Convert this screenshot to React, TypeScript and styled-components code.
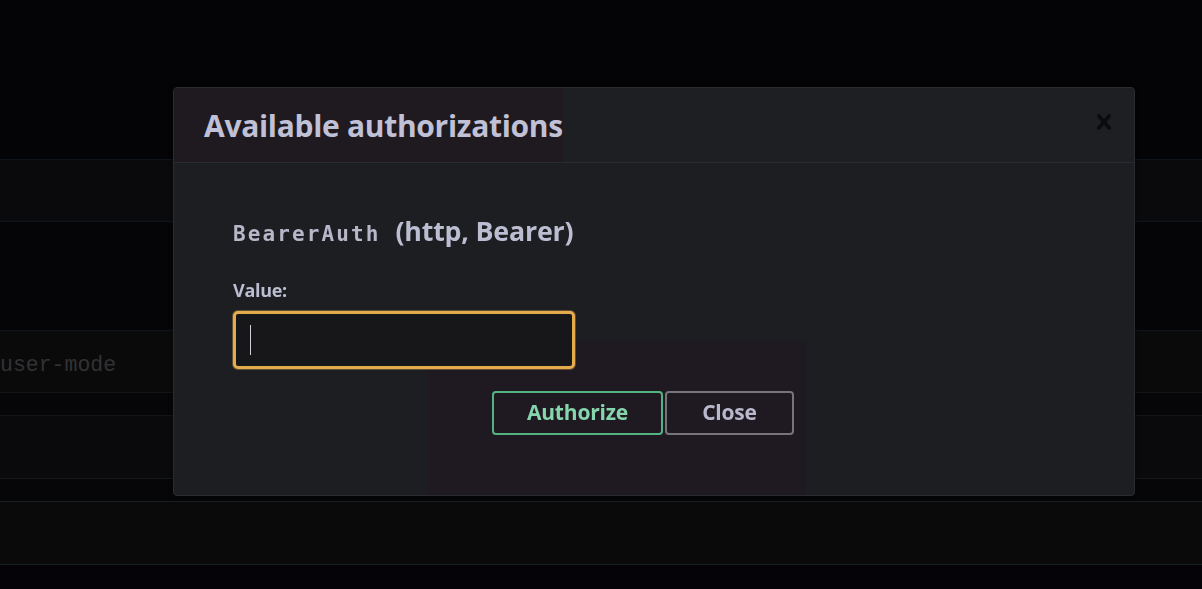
import React from 'react';
import styled, { createGlobalStyle } from 'styled-components';

const GlobalStyle = createGlobalStyle`
  html, body {
    margin: 0;
    padding: 0;
    background: #040305;
    overflow: hidden;
  }
`;

const rows = [
  { height: 159, bg: '#040305', line: '#0f151d' },
  { height: 61, bg: '#0a090b', line: '#10161e' },
  { height: 108, bg: '#050407', line: '#10161e' },
  { height: 61, bg: '#0a0a0a', line: '#141518', text: 'user-mode' },
  { height: 22, bg: '#060508', line: '#141518' },
  { height: 62, bg: '#0a090b', line: '#141a1a' },
  { height: 22, bg: '#060508', line: '#17211e' },
  { height: 62, bg: '#0a0a0a', line: '#17211e' },
  { height: 30, bg: '#050307', line: 'transparent' },
];

const Page = styled.div`
  width: 1202px;
  height: 589px;
  display: flex;
  flex-direction: column;
  overflow: hidden;
`;

const Row = styled.div<{ $h: number; $bg: string; $line: string }>`
  flex: none;
  height: ${(p) => p.$h}px;
  background: ${(p) => p.$bg};
  border-bottom: 1px solid ${(p) => p.$line};
  display: flex;
  align-items: center;
`;

const RowText = styled.span`
  font-family: 'Liberation Mono', monospace;
  font-size: 21.5px;
  color: #323235;
  margin-top: 6px;
`;

const Backdrop = styled.div`
  position: fixed;
  inset: 0;
`;

const Modal = styled.div`
  position: absolute;
  left: 173px;
  top: 87px;
  width: 960px;
  height: 407px;
  background: #1d1e22;
  border: 1px solid #2b2c31;
  border-radius: 4px;
  box-shadow: 0 1px 4px rgba(0, 0, 0, 0.5);
  display: flex;
  flex-direction: column;
  overflow: hidden;
`;

const Header = styled.div`
  height: 74px;
  flex: none;
  display: flex;
  align-items: center;
  justify-content: space-between;
  border-bottom: 1px solid #2a2b30;
  background: #1e1f23;
`;

const Title = styled.h3`
  margin: 0;
  height: 100%;
  display: flex;
  align-items: center;
  padding: 0 0 0 30px;
  background: #1e1a20;
  font-family: 'Open Sans', 'Noto Sans', sans-serif;
  font-weight: 700;
  font-size: 30px;
  color: #c0c0d6;
  letter-spacing: -0.3px;
`;

const CloseX = styled.button`
  border: none;
  background: transparent;
  padding: 0;
  margin: 0 15px 6px 0;
  width: 30px;
  height: 30px;
  display: flex;
  align-items: center;
  justify-content: center;
  cursor: pointer;
`;

const Body = styled.div`
  position: relative;
  flex: 1;
  padding: 53px 60px 0 59px;
`;

const Tint = styled.div`
  position: absolute;
  left: 254px;
  top: 178px;
  width: 378px;
  bottom: 0;
  background: #1f1a21;
  pointer-events: none;
`;

const SchemeTitle = styled.h4`
  position: relative;
  margin: 0;
  display: flex;
  align-items: baseline;
  gap: 15px;
  line-height: 30px;
  color: #bdbdd1;
`;

const SchemeName = styled.code`
  font-family: 'DejaVu Sans Mono', monospace;
  font-weight: 700;
  font-size: 21px;
  letter-spacing: 2.1px;
  color: #b7b7c9;
`;

const SchemeType = styled.span`
  font-family: 'Open Sans', 'Noto Sans', sans-serif;
  font-weight: 700;
  font-size: 26.8px;
  letter-spacing: -0.2px;
`;

const Label = styled.label`
  position: relative;
  display: block;
  margin-top: 31px;
  line-height: 20px;
  font-family: 'Open Sans', 'Noto Sans', sans-serif;
  font-weight: 700;
  font-size: 18px;
  letter-spacing: -0.3px;
  color: #bdbdd1;
`;

const Input = styled.div`
  position: relative;
  margin-top: 11px;
  height: 52px;
  width: 322px;
  border: 3px solid #e3ab4c;
  border-radius: 5px;
  background: #17171a;
  box-shadow: 0 0 0 1px rgba(227, 171, 76, 0.35);
  display: flex;
  align-items: center;
  padding-left: 14px;
  box-sizing: content-box;
`;

const Caret = styled.span`
  width: 1px;
  height: 30px;
  background: #cfcfd8;
`;

const Actions = styled.div`
  position: relative;
  display: flex;
  gap: 2px;
  margin-top: 22px;
  padding-left: 259px;
`;

const Button = styled.button<{ $tone: 'green' | 'grey' }>`
  height: 44px;
  box-sizing: border-box;
  padding: 0 0 3px;
  width: ${(p) => (p.$tone === 'green' ? 171 : 129)}px;
  border: 2px solid ${(p) => (p.$tone === 'green' ? '#53b383' : '#76757c')};
  color: ${(p) => (p.$tone === 'green' ? '#86d6ad' : '#b9b9cd')};
  background: transparent;
  border-radius: 4px;
  font-family: 'Open Sans', 'Noto Sans', sans-serif;
  font-weight: 700;
  font-size: 21px;
  letter-spacing: -0.2px;
  cursor: pointer;
`;

export default function App() {
  return (
    <>
      <GlobalStyle />
      <Page>
        {rows.map((r, i) => (
          <Row key={i} $h={r.height} $bg={r.bg} $line={r.line}>
            {r.text && <RowText>{r.text}</RowText>}
          </Row>
        ))}
      </Page>
      <Backdrop>
        <Modal>
          <Header>
            <Title>Available authorizations</Title>
            <CloseX aria-label="Close">
              <svg width="30" height="30" viewBox="0 0 20 20" fill="#0b0b0d">
                <path d="M14.348 14.849a1.2 1.2 0 0 1-1.697 0L10 11.819l-2.651 3.029a1.2 1.2 0 1 1-1.697-1.697l2.758-3.15-2.759-3.152a1.2 1.2 0 1 1 1.697-1.697L10 8.183l2.651-3.031a1.2 1.2 0 1 1 1.697 1.697l-2.758 3.152 2.758 3.15a1.2 1.2 0 0 1 0 1.698z" />
              </svg>
            </CloseX>
          </Header>
          <Body>
            <Tint />
            <SchemeTitle>
              <SchemeName>BearerAuth</SchemeName>
              <SchemeType>(http, Bearer)</SchemeType>
            </SchemeTitle>
            <Label>Value:</Label>
            <Input>
              <Caret />
            </Input>
            <Actions>
              <Button $tone="green">Authorize</Button>
              <Button $tone="grey">Close</Button>
            </Actions>
          </Body>
        </Modal>
      </Backdrop>
    </>
  );
}
